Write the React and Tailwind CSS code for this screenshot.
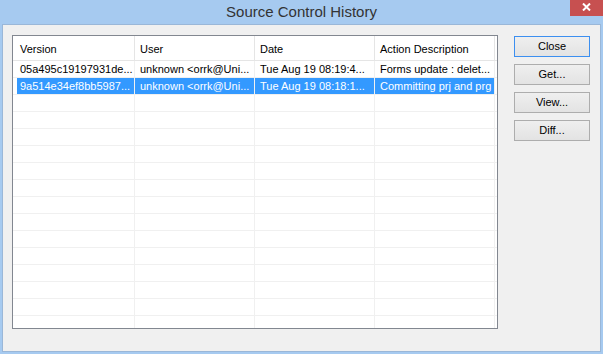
export default function App() {
  const rows = [
    ["05a495c19197931de...", "unknown <orrk@Uni...", "Tue Aug 19 08:19:4...", "Forms update : delet..."],
    ["9a514e34ef8bb5987...", "unknown <orrk@Uni...", "Tue Aug 19 08:18:1...", "Committing prj and prg"],
  ];
  const all = [...rows];
  for (let i = 0; i < 14; i++) all.push(["", "", "", ""]);
  const widths = ["w-[122px]", "w-[120px]", "w-[120px]", "w-[120px]"];
  const headers = ["Version", "User", "Date", "Action Description"];

  return (
    <div className="w-[603px] h-[354px] bg-[#a6caf0] flex flex-col font-['Liberation_Sans',Arial,sans-serif] overflow-hidden">
      {/* Title bar */}
      <div className="h-[24px] shrink-0 relative flex items-center justify-center">
        <span className="text-[15px] text-[#333333] leading-none pb-[1px]">Source Control History</span>
        <div className="absolute right-0 top-0 w-[33px] h-[16px] bg-[#c75050] flex items-center justify-center">
          <svg width="9" height="8" viewBox="0 0 9 8" className="mt-[-3px]">
            <path d="M1 0.5 L8 7.5 M8 0.5 L1 7.5" stroke="#ffffff" strokeWidth="2" fill="none" />
          </svg>
        </div>
      </div>
      {/* Client area */}
      <div className="mx-[2px] mb-[2px] flex-1 border border-[#9ab7d8] bg-[#f0f0f0] flex items-start pl-[9px] pt-[10px]">
        {/* List */}
        <div className="w-[486px] h-[294px] border border-[#828790] bg-white overflow-hidden flex flex-col text-[11px] text-black">
          <div className="h-[25px] shrink-0 flex border-b border-[#e5e5e5]">
            {headers.map((h, i) => (
              <div
                key={i}
                className={`${widths[i]} shrink-0 border-r border-[#e5e5e5] flex items-center pt-[2px] ${i === 0 ? "pl-[7px]" : "pl-[5px]"}`}
              >
                {h}
              </div>
            ))}
          </div>
          {all.map((r, ri) => {
            const sel = ri === 1;
            return (
              <div key={ri} className="h-[17px] shrink-0 flex border-b border-[#f0f0f0]">
                {r.map((c, ci) => (
                  <div key={ci} className={`${widths[ci]} shrink-0 border-r border-[#f0f0f0] flex`}>
                    {ci === 0 ? (
                      <div className={`ml-[4px] flex-1 flex items-center pl-[3px] whitespace-nowrap ${sel ? "bg-[#3399ff] text-white" : ""}`}>
                        {c}
                      </div>
                    ) : (
                      <div className={`flex-1 flex items-center pl-[5px] whitespace-nowrap ${sel ? "bg-[#3399ff] text-white" : ""}`}>
                        {c}
                      </div>
                    )}
                  </div>
                ))}
              </div>
            );
          })}
        </div>
        {/* Buttons */}
        <div className="ml-[16px] mt-[1px] flex flex-col gap-[7px] text-[11px] text-black">
          {["Close", "Get...", "View...", "Diff..."].map((b, i) => (
            <div
              key={b}
              className={`w-[76px] h-[21px] border ${i === 0 ? "border-[#3c8ff0]" : "border-[#adadad]"} bg-linear-to-b from-[#efefef] to-[#e3e3e3] flex items-center justify-center`}
            >
              {b}
            </div>
          ))}
        </div>
      </div>
    </div>
  );
}
